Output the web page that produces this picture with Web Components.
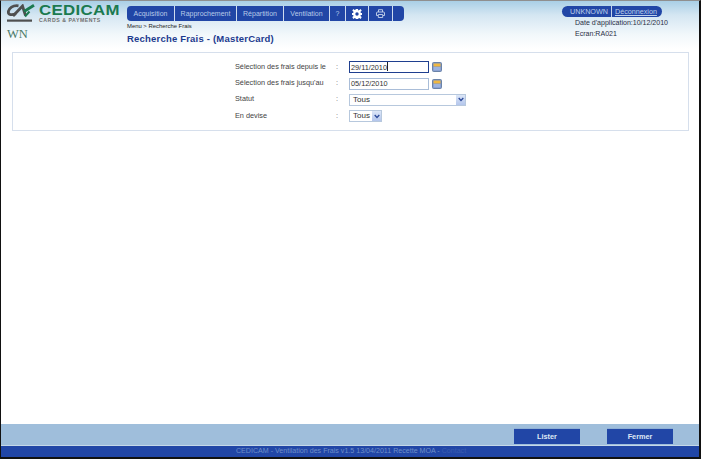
<!DOCTYPE html>
<html><head><meta charset="utf-8">
<style>
html,body{margin:0;padding:0;background:#fff;height:100%;overflow:hidden}
body{font-family:"Liberation Sans",Arial,sans-serif}
</style></head>
<body>
<app-shell>
  <app-header slot="header"></app-header>
  <form-panel slot="main">
    <form-row label="Sélection des frais depuis le"><date-field value="29/11/2010" focused></date-field></form-row>
    <form-row label="Sélection des frais jusqu'au"><date-field value="05/12/2010"></date-field></form-row>
    <form-row label="Statut"><select-field value="Tous" width="117"></select-field></form-row>
    <form-row label="En devise"><select-field value="Tous" width="33"></select-field></form-row>
  </form-panel>
  <app-footer slot="footer"></app-footer>
</app-shell>
<script>
function def(name, css, html){
  customElements.define(name, class extends HTMLElement{
    constructor(){super();const s=this.attachShadow({mode:'open'});
      s.innerHTML='<style>'+css+'</style>'+(typeof html==='function'?html(this):html);}
  });
}
def('app-shell',`
:host{display:flex;flex-direction:column;width:701px;height:459px;box-sizing:border-box;
 border-top:1px solid #8f8f8f;border-left:1px solid #111;border-right:2px solid #111;border-bottom:2px solid #111;background:#fff;overflow:hidden}
.main{flex:1;min-height:0}
`,`<slot name="header"></slot><div class="main"><slot name="main"></slot></div><slot name="footer"></slot>`);

def('app-header',`
:host{display:flex;height:49px;box-sizing:border-box;background:linear-gradient(#a9cfe6 0,#d4e6f2 14px,#f2f8fb 34px,#fff 48px);color:#1f2f6f}
.brand{width:126px;flex:none;padding:3px 0 0 6px;box-sizing:border-box;display:flex;flex-direction:column}
.logo{display:flex;align-items:flex-start;height:23px}
.logo svg{flex:none}
.names{margin-left:4px;display:flex;flex-direction:column}
.cedicam{font:700 14px/11px "Liberation Sans",sans-serif;color:#1b7a50;letter-spacing:.3px;margin-top:1px;transform:scaleX(1.2);transform-origin:left center;white-space:nowrap}
.cp{font:700 5.2px/6px "Liberation Sans",sans-serif;color:#6f6f6f;letter-spacing:.55px;margin-top:1px;white-space:nowrap}
.wn{font:12.5px/14px "Liberation Serif",serif;color:#4a7a68;margin-top:0}
.center{flex:none;width:435px;padding-top:5px;box-sizing:border-box}
.crumb{font:5.9px/8px "Liberation Sans",sans-serif;color:#222;margin-top:1px}
.title{font:700 9.5px/13px "Liberation Sans",sans-serif;color:#1c3a8e;letter-spacing:.2px;margin-top:2px}
.right{flex:none;width:136px;padding-top:5px;box-sizing:border-box}
.pill{display:flex;width:100px;height:11px;border-radius:6px;background:#2146a6;font:7.2px/11px "Liberation Sans",sans-serif;color:#bcd0ea}
.pill span{padding:0 3px 0 8px;border-right:1px solid #c4d4ea}
.pill a{padding-left:3px;color:#bcd0ea;text-decoration:underline}
.info{padding-left:13px;font:7.05px/11px "Liberation Sans",sans-serif;color:#2a2f45;margin-top:0}
`,`<div class="brand">
  <div class="logo">
   <svg width="28" height="18" viewBox="0 0 28 18">
    <path d="M11.500 1.800C6 .8 1.700 4.500 1.300 7.800 1 10.800 4.500 11.500 9 9.800" fill="none" stroke="#4f4f4f" stroke-width="2.800"/>
    <path d="M6 12 15.500 2 18.500 11.500" fill="none" stroke="#4f4f4f" stroke-width="2.800"/>
    <path d="M17 7.500 27 1.200" fill="none" stroke="#1b7a50" stroke-width="2.800"/>
    <path d="M18 12.500l4.500-5" fill="none" stroke="#1b7a50" stroke-width="2"/>
    <rect x="0" y="15.500" width="25" height="2.200" fill="#4f4f4f"/>
   </svg>
   <div class="names"><div class="cedicam">CEDICAM</div><div class="cp">CARDS &amp; PAYMENTS</div></div>
  </div>
  <div class="wn">WN</div>
 </div>
 <div class="center">
  <main-menu></main-menu>
  <div class="crumb">Menu &gt; Recherche Frais</div>
  <div class="title">Recherche Frais - (MasterCard)</div>
 </div>
 <div class="right">
  <div class="pill"><span>UNKNOWN</span><a>Déconnexion</a></div>
  <div class="info">Date d'application:10/12/2010<br>Ecran:RA021</div>
 </div>`);

def('main-menu',`
:host{display:flex;width:277px;height:15px;background:#2146a6;border-radius:4px;overflow:hidden;font:7px/15px "Liberation Sans",sans-serif;color:#b8cbe8}
div{box-sizing:border-box;border-right:1px solid #cfdcee;text-align:center;display:flex;align-items:center;justify-content:center}
div.end{border:0;flex:1}
`,`<div style="width:48px">Acquisition</div><div style="width:62px">Rapprochement</div><div style="width:47px">Répartition</div><div style="width:46px">Ventilation</div><div style="width:16px">?</div><div style="width:23px"><svg width="10" height="10" viewBox="0 0 10 10"><path fill="#fff" fill-rule="evenodd" d="M4 0h2l.3 1.500 1-.5L8.700 0l1 1.700-1.200 1 .3 1.300H10v2H8.800l-.3 1.100 1.200 1L8.700 10 7.300 9.100l-1 .4L6 10H4l-.3-.5-1-.4L1.300 10 .3 8.100l1.200-1L1.200 6H0V4h1.200l.3-1.300-1.200-1L1.300 0l1.400 1 1-.5zM5 3.300a1.700 1.700 0 1 0 0 3.400 1.700 1.700 0 0 0 0-3.400z"/></svg></div><div style="width:24px"><svg width="9" height="9" viewBox="0 0 9 9"><path d="M2.500 3V.7h4V3M1.500 3h6a1 1 0 0 1 1 1v2.500H7M2 6.500H.5V4a1 1 0 0 1 1-1M2.300 5.500h4.400v3H2.300z" fill="none" stroke="#c8d6ec" stroke-width=".9"/></svg></div><div class="end"></div>`);

def('form-panel',`
:host{display:block;margin:2px 10px 0 11px;height:79px;box-sizing:border-box;border:1px solid #d6dfec;padding:6px 0 0 222px}
`,`<slot></slot>`);

def('form-row',`
:host{display:flex;align-items:center;height:16.400px;font:7.300px/10px "Liberation Sans",sans-serif;color:#444}
.l{width:101px;flex:none;margin-top:-1px}
.c{width:13px;flex:none;color:#666;margin-top:-1px}
`,h=>`<div class="l">${h.getAttribute('label')}</div><div class="c">:</div><slot></slot>`);

def('date-field',`
:host{display:flex;align-items:center;gap:3px}
.i{width:80px;height:12px;box-sizing:border-box;border:1px solid #a9bdd8;background:#fff;font:7.300px/10px "Liberation Sans",sans-serif;color:#333;padding-left:1px;white-space:nowrap}
:host([focused]) .i{border-color:#1f3f8f}
.caret{display:inline-block;width:1px;height:9px;background:#222;vertical-align:-1.500px}
`,h=>`<div class="i">${h.getAttribute('value')}${h.hasAttribute('focused')?'<span class="caret"></span>':''}</div>
<svg width="10" height="10" viewBox="0 0 10 10"><rect x=".5" y=".5" width="9" height="9" rx="1" fill="#7b93c6" stroke="#6a83a8"/><rect x="1.500" y="1.500" width="7" height="3" fill="#f0b840"/><rect x="1.500" y="5" width="7" height="3.500" fill="#9db4e0"/></svg>`);

def('select-field',`
:host{display:block}
.s{height:12px;box-sizing:border-box;border:1px solid #b7c8dd;background:#fff;font:8px/10px "Liberation Sans",sans-serif;color:#333;padding-left:3px;display:flex;align-items:center;justify-content:space-between}
.b{width:9px;height:10px;background:linear-gradient(#dce6f7,#b4c6ec);display:flex;align-items:center;justify-content:center}
`,h=>`<div class="s" style="width:${h.getAttribute('width')}px">${h.getAttribute('value')}<div class="b"><svg width="6" height="5" viewBox="0 0 6 5"><path d="M.7 1 3 3.500 5.300 1" fill="none" stroke="#2c4a9a" stroke-width="1.300"/></svg></div></div>`);

def('app-footer',`
:host{display:block;flex:none}
.bar{height:22px;background:#9fbedb;border-bottom:1px solid #c5d8e8;display:flex;justify-content:flex-end;gap:27px;padding:4px 26px 0 0;box-sizing:border-box}
.btn{width:66px;height:16px;background:#2146a6;color:#dfe8f5;font:700 7.300px/15px "Liberation Sans",sans-serif;text-align:center;border-top:1px solid #8fb0d6;box-sizing:border-box}
.sub{height:11px;background:#2146a6;color:#6f8fc8;font:7.100px/11px "Liberation Sans",sans-serif;padding-left:235px}
.sub a{color:#3a5cb0}
`,`<div class="bar"><div class="btn">Lister</div><div class="btn">Fermer</div></div>
<div class="sub">CEDICAM - Ventilation des Frais v1.5 13/04/2011 Recette MOA - <a>Contact</a></div>`);
</script>
</body></html>
